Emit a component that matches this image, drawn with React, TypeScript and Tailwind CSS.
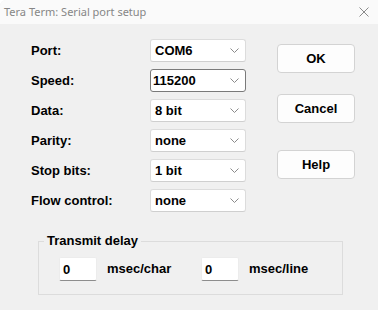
import React from 'react';

const rows = [
  { label: 'Port:', value: 'COM6' },
  { label: 'Speed:', value: '115200', focused: true },
  { label: 'Data:', value: '8 bit' },
  { label: 'Parity:', value: 'none' },
  { label: 'Stop bits:', value: '1 bit' },
  { label: 'Flow control:', value: 'none' },
];

const dlgFont = { fontFamily: '"Liberation Sans", Arial, sans-serif' };

function Chevron() {
  return (
    <svg width="9" height="5" viewBox="0 0 9 5" className="shrink-0">
      <path d="M0.5 0.5 L4.5 4.5 L8.5 0.5" fill="none" stroke="#8a8a8a" strokeWidth="1" />
    </svg>
  );
}

function Combo({ value, focused }: { value: string; focused?: boolean }) {
  return (
    <div
      className={
        'flex items-center justify-between w-[96px] h-[23px] bg-white rounded-[3px] pr-[6px] ' +
        (focused ? 'border border-[#7a7a7a] pl-[2px]' : 'border border-[#dcdcdc] border-b-[#cfcfcf] pl-[4px]')
      }
    >
      <span className="text-[13px] font-bold text-black leading-none">{value}</span>
      <Chevron />
    </div>
  );
}

function DlgButton({ children }: { children: React.ReactNode }) {
  return (
    <button
      type="button"
      className="w-[78px] h-[29px] bg-[#fdfdfd] border border-[#d3d3d3] rounded-[4px] text-[13px] font-bold text-black"
    >
      {children}
    </button>
  );
}

function NumBox({ value }: { value: string }) {
  return (
    <div className="flex items-center w-[38px] h-[24px] bg-white border border-[#ececec] border-b-[#8d8d8d] rounded-[2px] pl-[3px]">
      <span className="text-[13px] font-bold text-black leading-none">{value}</span>
    </div>
  );
}

export default function App() {
  return (
    <div className="w-[378px] h-[310px] bg-[#f0f0f0] rounded-tl-[6px] overflow-hidden flex flex-col" style={dlgFont}>
      {/* title bar */}
      <div className="h-[24px] bg-[#fafafa] flex items-center justify-between pl-[4px] pr-[9px]">
        <span className="text-[11px] text-[#868686]" style={{ fontFamily: '"Noto Sans", "Open Sans", sans-serif' }}>
          Tera Term: Serial port setup
        </span>
        <svg width="10" height="10" viewBox="0 0 10 10">
          <path d="M0.5 0.5 L9.5 9.5 M9.5 0.5 L0.5 9.5" stroke="#8a8a8a" strokeWidth="1" />
        </svg>
      </div>

      <div className="flex pt-[15px]">
        <div className="flex flex-col gap-[7px] pl-[31px]">
          {rows.map((r) => (
            <div key={r.label} className="flex items-center">
              <span className="w-[119px] text-[13px] font-bold text-black">{r.label}</span>
              <Combo value={r.value} focused={r.focused} />
            </div>
          ))}
        </div>
        <div className="flex flex-col ml-[31px] pt-[5px]">
          <DlgButton>OK</DlgButton>
          <div className="mt-[21px]">
            <DlgButton>Cancel</DlgButton>
          </div>
          <div className="mt-[27px]">
            <DlgButton>Help</DlgButton>
          </div>
        </div>
      </div>

      <fieldset className="ml-[38px] mt-[21px] w-[305px] border border-[#dcdcdc] pl-[5px] pb-[13px]">
        <legend className="px-[3px] text-[13px] font-bold text-black leading-[16px]">Transmit delay</legend>
        <div className="flex items-center ml-[15px] mt-[8px]">
          <NumBox value="0" />
          <span className="w-[104px] pl-[10px] text-[13px] font-bold text-black">msec/char</span>
          <NumBox value="0" />
          <span className="ml-[10px] text-[13px] font-bold text-black">msec/line</span>
        </div>
      </fieldset>
    </div>
  );
}
